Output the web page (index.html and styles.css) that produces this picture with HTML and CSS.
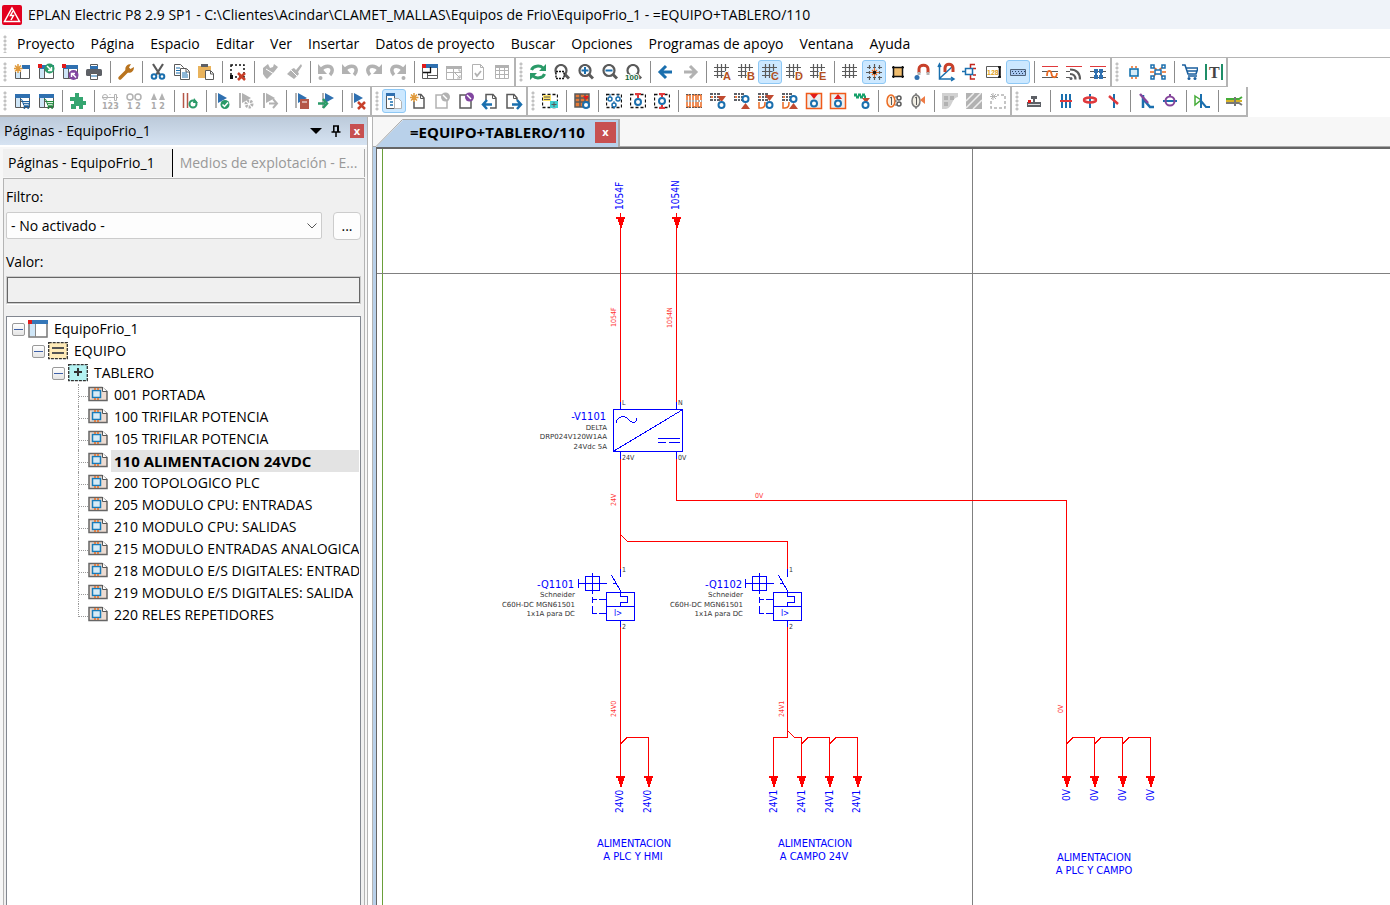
FILE: index.html
```html
<!DOCTYPE html>
<html lang="es">
<head>
<meta charset="utf-8">
<title>EPLAN Electric P8 2.9 SP1</title>
<link rel="stylesheet" href="styles.css">
</head>
<body>
<svg class="defs" aria-hidden="true">
  <symbol id="win" viewBox="0 0 16 16"><path class="fw k" d="M1.500 2.500h14v12h-14z"/><path class="fb" d="M1 1h15v4H1z"/><path class="fl" d="M2 5h4v9H2z"/><path class="k" d="M6.500 5v9"/></symbol>
  <symbol id="star" viewBox="0 0 16 16"><path class="o2" stroke-width="1.500" d="M4 0v9M-.5 4.500h9M1 1.500l6 6M7 1.500l-6 6"/></symbol>
  <symbol id="page" viewBox="0 0 16 16"><path class="fw k" stroke-width="1.500" d="M4 1.500h7l3 3.500v10H4z"/><path class="k" d="M10.500 1.500V5.500H14"/></symbol>
  <symbol id="flag" viewBox="0 0 16 16"><path class="g" stroke-width="2" d="M2 0v15"/><path class="fb" d="M4 0l9 5-9 5z"/></symbol>
  <symbol id="gflag" viewBox="0 0 16 16"><path class="g" stroke-width="2" d="M2 0v15"/><path class="fg" d="M4 0l9 5-9 5z"/></symbol>
  <symbol id="grid" viewBox="0 0 16 16"><path class="k" stroke-width="1.300" d="M4.500 1v14M8.500 1v14M12.500 1v14M1 4.500h15M1 8.500h15M1 12.500h15"/></symbol>
  <symbol id="lgrid" viewBox="0 0 16 16"><path class="k" stroke-width="1.200" d="M3.500 0v14M7.500 0v14M11.500 0v14M0 3.500h15M0 7.500h15M0 11.500h15"/></symbol>
  <symbol id="dash" viewBox="0 0 16 16"><path class="kk" stroke-dasharray="3 2" stroke-width="1.300" d="M.5 1.500h15v13H.5z"/></symbol>
  <symbol id="lens" viewBox="0 0 16 16"><circle class="k" stroke-width="2.200" cx="7" cy="6.500" r="5.500"/><path class="k" stroke-width="3" d="M11 10.500l4 4"/></symbol>
  <symbol id="undo" viewBox="0 0 16 16"><path class="g" stroke-width="3.500" d="M3 5.500C7 1 13 1.500 14 5c.5 2 0 4-2 6"/><path class="fg" d="M0 0v10h9z"/></symbol>
  <symbol id="cart" viewBox="0 0 16 16"><path stroke="currentColor" stroke-width="1.600" d="M0 1h3l3 9h8l2-6H4M5 7h10M6 12h9"/><circle fill="currentColor" cx="7" cy="14.500" r="1.500"/><circle fill="currentColor" cx="13" cy="14.500" r="1.500"/></symbol>
  <symbol id="tgrid" viewBox="0 0 16 16"><path class="fk" d="M0 0h10v8H0z"/><path stroke="#fff" d="M0 2.500h10M0 5.500h10M3.500 0v8M6.500 0v8"/><path class="fo" d="M1 3h2v2H1z"/></symbol>
  <symbol id="pin" viewBox="0 0 16 16"><circle class="fw b" stroke-width="2" cx="11.500" cy="12" r="3"/></symbol>
  <symbol id="leaf" viewBox="0 0 20 16"><path fill="#eddcd2" stroke="#666" stroke-width="1.500" d="M1 1.500h13l5 4V14.500H1z"/><path fill="#fff" stroke="#555" d="M14.500 1v4.500H19"/><path fill="#d5ebf7" stroke="#187cba" stroke-width="1.500" d="M4.500 4.500h8v7h-8z"/><path stroke="#e66b20" stroke-width="1.500" d="M7 2v2M10 2v2M7 12v2M10 12v2"/></symbol>
</svg>

<header class="titlebar">
  <svg class="logo" viewBox="0 0 20 20" aria-hidden="true"><rect width="20" height="20" rx="2" fill="#e2001f"/><path d="M10 3l7.500 13.500h-15z" fill="none" stroke="#fff" stroke-width="1.500"/><path d="M11 6l-2.500 4.500h3L9 15" fill="none" stroke="#fff" stroke-width="1.500"/></svg>
  <h1>EPLAN Electric P8 2.9 SP1 - C:\Clientes\Acindar\CLAMET_MALLAS\Equipos de Frio\EquipoFrio_1 - =EQUIPO+TABLERO/110</h1>
</header>

<nav class="menubar" aria-label="Menú">
  <i class="grip"></i>
  <button>Proyecto</button><button>Página</button><button>Espacio</button><button>Editar</button><button>Ver</button><button>Insertar</button><button>Datos de proyecto</button><button>Buscar</button><button>Opciones</button><button>Programas de apoyo</button><button>Ventana</button><button>Ayuda</button>
</nav>

<div class="toolrow">
  <div class="group" role="toolbar" aria-label="Estándar">
    <i class="grip"></i>
    <button aria-label="Nuevo proyecto"><svg viewBox="0 0 16 16"><use href="#win"/><path class="fw" d="M0 0h8v8H0z"/><use href="#star"/></svg></button>
    <button aria-label="Abrir proyecto"><svg viewBox="0 0 16 16"><use href="#win"/><path class="fr" d="M0 0h4v4H0z"/><circle class="fn" cx="11.500" cy="4.500" r="5"/><path stroke="#fff" stroke-width="1.500" d="M9 2l4 4M13.500 3v3.500H10"/></svg></button>
    <button aria-label="Cerrar proyecto"><svg viewBox="0 0 16 16"><use href="#win"/><path class="fr" d="M0 0h4v4H0z"/><circle class="fv" cx="11.500" cy="11" r="5"/><path stroke="#fff" stroke-width="1.500" d="M14 13.500l-4-4M9.500 13V9.500H13"/></svg></button>
    <button aria-label="Imprimir"><svg viewBox="0 0 16 16"><path class="fw k" d="M4.500.5h7v5h-7z"/><path class="fb" d="M4 2h8v3H4z"/><rect class="fk" x="0" y="5" width="16" height="7" rx="1.500"/><path class="fw k" d="M4.500 9.500h7v6h-7z"/><path class="b" d="M5 12h6"/></svg></button>
    <i class="sep"></i>
    <button aria-label="Ajustes"><svg viewBox="0 0 16 16"><path stroke="#b9741f" stroke-width="3.500" stroke-linecap="round" d="M2 14l8-8"/><path fill="#b9741f" d="M8 8C6 3 9 0 13 0l-2 3.500 1.500 1.500L16 3c0 5-4 7-8 5z"/></svg></button>
    <i class="sep"></i>
    <button aria-label="Cortar"><svg viewBox="0 0 16 16"><path class="k" stroke-width="2.200" d="M3 0l7 11M13 0L6 11"/><circle class="b" stroke-width="2" cx="4" cy="12.500" r="2.300"/><circle class="b" stroke-width="2" cx="12" cy="12.500" r="2.300"/></svg></button>
    <button aria-label="Copiar"><svg viewBox="0 0 16 16"><path class="fw k" d="M.5.500h6l3 3v8h-9z"/><path class="b" d="M2 4h4M2 6.500h4M2 9h4"/><path class="fw k" d="M6.500 4.500h6l3 3v8h-9z"/><path class="k" d="M12 5v3h3"/><path class="b" d="M8 9h5M8 11h6M8 13h6"/></svg></button>
    <button aria-label="Pegar"><svg viewBox="0 0 16 16"><path fill="#e9b35c" d="M0 2h13v12H0z"/><path class="fk" d="M3 0h7v3H3z"/><path class="fw k" d="M7.500 6.500h5l3 3v6h-8z"/><path class="k" d="M12.500 7v3h3"/></svg></button>
    <i class="sep"></i>
    <button aria-label="Borrar selección"><svg viewBox="0 0 16 16"><path class="kk" stroke-dasharray="2 2" stroke-width="1.500" d="M1 1h13v12H1z"/><path class="kf" d="M0 11h3v4H0z"/><path class="r2" stroke-width="2.500" d="M8 9l7 7M15 9l-7 7"/></svg></button>
    <i class="sep"></i>
    <button aria-label="Copiar formato" disabled><svg viewBox="0 0 16 16"><path class="fg" d="M1 4l5-4 2 4 3-1 1-3 4 3-4 5-7 7-2-2-2-3z"/><path stroke="#fff" d="M4 5l8 5"/></svg></button>
    <button aria-label="Asignar formato" disabled><svg viewBox="0 0 16 16"><path class="fg" d="M1 10l5-5 2-1 2 2 5-6 1 2-4 6 1 2-5 5z"/><path stroke="#fff" d="M5 6l6 6"/></svg></button>
    <i class="sep"></i>
    <button aria-label="Deshacer lista" disabled><svg viewBox="0 0 16 16"><use href="#undo"/><circle class="fg" cx="2.500" cy="14" r="2"/></svg></button>
    <button aria-label="Deshacer" disabled><svg viewBox="0 0 16 16"><use href="#undo"/></svg></button>
    <button aria-label="Restablecer" disabled><svg viewBox="0 0 16 16"><g transform="matrix(-1 0 0 1 16 0)"><use href="#undo"/></g></svg></button>
    <button aria-label="Restablecer lista" disabled><svg viewBox="0 0 16 16"><g transform="matrix(-1 0 0 1 16 0)"><use href="#undo"/><circle class="fg" cx="2.500" cy="14" r="2"/></g></svg></button>
    <i class="sep"></i>
    <button aria-label="Navegador"><svg viewBox="0 0 16 16"><path class="fw k" d="M.5 2.500h15v12H.5zM5.500 8v6M5.500 11.500h10"/><path class="fb" d="M4 0h12v4H4z"/><path class="fr" d="M0 0h4v4H0z"/><path class="kk" stroke-width="1.300" d="M8.500 3v5.500H1"/></svg></button>
    <button aria-label="Ajustar" disabled><svg viewBox="0 0 16 16"><path class="g" d="M.5 3.500h15v12H.5zM1 8.500h15M7.500 4v11M9 9l5 5M11 14h3v-3M12 6h2v2"/><path class="fg" d="M0 2h16v3H0z"/></svg></button>
    <button aria-label="Comprobar página" disabled><svg viewBox="0 0 16 16"><path class="g" d="M2.500.5h8l3 3v12h-11zM10.500.5v3h3"/><path class="g" stroke-width="1.800" d="M5 9l2 3 4-5"/></svg></button>
    <button aria-label="Tabla" disabled><svg viewBox="0 0 16 16"><path class="g" d="M1.500 1.500h13v13h-13zM2 6.500h12M2 10.500h12M5.500 4v10M10.500 4v10"/><path class="fg" d="M1 1h14v3H1z"/></svg></button>
  </div>
  <div class="group" role="toolbar" aria-label="Vista">
    <i class="grip"></i>
    <button aria-label="Actualizar"><svg viewBox="0 0 16 16"><path class="n" stroke-width="3" d="M1.500 6C3 1.500 10 1 13 4M14.500 10C13 14.500 6 15 3 12"/><path class="fn" d="M16 0v7H9zM0 16V9h7z"/></svg></button>
    <button aria-label="Zoom ventana"><svg viewBox="0 0 16 16"><use href="#lens"/><path class="fw kk" stroke-dasharray="2 1" stroke-width="1.400" d="M2 7.500h8v7H2z"/></svg></button>
    <button aria-label="Acercar"><svg viewBox="0 0 16 16"><use href="#lens"/><path class="b" stroke-width="2" d="M3.500 6.500h7M7 3v7"/></svg></button>
    <button aria-label="Alejar"><svg viewBox="0 0 16 16"><use href="#lens"/><path class="b" stroke-width="2" d="M3.500 6.500h7"/></svg></button>
    <button aria-label="Zoom 100"><svg viewBox="0 0 16 16"><use href="#lens"/><text x="-1" y="16" class="zt">100</text></svg></button>
    <i class="sep"></i>
    <button aria-label="Atrás"><svg viewBox="0 0 16 16"><path class="b" stroke-width="3" d="M2 8h12M8 2L2 8l6 6"/></svg></button>
    <button aria-label="Adelante"><svg viewBox="0 0 16 16"><path class="g" stroke-width="3" d="M14 8H2M8 2l6 6-6 6"/></svg></button>
    <i class="sep"></i>
    <button aria-label="Cuadrícula A"><svg viewBox="0 0 16 16"><use href="#lgrid"/><text class="gt" x="9" y="16">A</text></svg></button>
    <button aria-label="Cuadrícula B"><svg viewBox="0 0 16 16"><use href="#lgrid"/><text class="gt" x="9" y="16">B</text></svg></button>
    <button class="on" aria-label="Cuadrícula C"><svg viewBox="0 0 16 16"><use href="#lgrid"/><text class="gt" x="9" y="16">C</text></svg></button>
    <button aria-label="Cuadrícula D"><svg viewBox="0 0 16 16"><use href="#lgrid"/><text class="gt" x="9" y="16">D</text></svg></button>
    <button aria-label="Cuadrícula E"><svg viewBox="0 0 16 16"><use href="#lgrid"/><text class="gt" x="9" y="16">E</text></svg></button>
    <i class="sep"></i>
    <button aria-label="Cuadrícula"><svg viewBox="0 0 16 16"><use href="#lgrid"/></svg></button>
    <button class="on" aria-label="Ajustar a cuadrícula"><svg viewBox="0 0 16 16"><path class="k" stroke-width="1.200" d="M3.500 1v4M3.500 12v4M13.500 1v4M13.500 12v4M1 3.500h4M1 13.500h4M12 3.500h4M12 13.500h4M8.500 0v4M8.500 13v3M0 8.500h4M13 8.500h3M3.500 7v3M13.500 7v3M7 3.500h3M7 13.500h3"/><path class="o" stroke-width="1.200" d="M8.500 4v9M4 8.500h9M6 6l5 5M11 6l-5 5"/><circle class="kf" cx="8.500" cy="8.500" r="1.800"/></svg></button>
    <button aria-label="Alinear a cuadrícula"><svg viewBox="0 0 16 16"><path fill="#f0bd6d" d="M4 4h8v8H4z"/><path class="kk" stroke-width="1.500" d="M2 3.500h12M2 12.500h12M3.500 2v12M12.500 2v12"/></svg></button>
    <button aria-label="Ajuste a objeto"><svg viewBox="0 0 16 16"><path class="r2" stroke-width="3" d="M5 9V5c0-5 9-5 9 0v4"/><path class="g" stroke-width="3" d="M5 8v3M14 8v3"/><circle class="fb" cx="3" cy="13.500" r="2.500"/></svg></button>
    <button aria-label="Lógica de diseño"><svg viewBox="0 0 16 16"><path class="b" stroke-width="1.500" d="M1.500 1v14h14M2 14L14 3M0 3l1.500-3L3 3M13 13l3 2-3 2"/><path class="r2" stroke-width="3" d="M7 8V4c0-5 8-5 8 0v4"/></svg></button>
    <button aria-label="Conectar automáticamente"><svg viewBox="0 0 16 16"><path stroke="#c4261d" stroke-width="1.500" d="M13 .5H8.500V5M8.500 10v5H13M14 4.500h-3M14 11h-3"/><path class="b fw" stroke-width="1.500" d="M3.500 4.500h7v6h-7zM0 7.500h3"/></svg></button>
    <button aria-label="Entrada de coordenadas"><svg viewBox="0 0 16 16"><path class="k fw" d="M.5 2.500h14v11H.5z"/><text class="ct" x="1" y="11">128</text><path class="kk" stroke-width="1.500" d="M12 3h3M13.500 3v10M12 13h3"/></svg></button>
    <button class="on" aria-label="Regla"><svg viewBox="0 0 16 16"><path fill="#a9c9f0" stroke="#506176" d="M.5 5.500h15v6H.5z"/><path stroke="#263f60" stroke-dasharray="1 2" d="M2 7.500h13M3 9.500h10"/></svg></button>
    <i class="sep"></i>
    <button aria-label="Conexiones"><svg viewBox="0 0 16 16"><path class="r" d="M0 2.500h16"/><path class="k" d="M0 7.500h16M0 13.500h16"/><path class="o" stroke-width="1.800" d="M5 12c0-7 4-6 4.500-2s5 5 5.500-1"/></svg></button>
    <button aria-label="Señales"><svg viewBox="0 0 16 16"><path class="r" d="M0 2.500h16"/><path class="k" d="M0 7.500h4M0 13.500h4"/><path class="k" stroke-width="2.200" d="M4 5.500c7 0 10 4 10 10M4 10c4 0 5.500 2 5.500 5.500"/><circle class="fk" cx="5" cy="14.500" r="1.500"/></svg></button>
    <button aria-label="Potenciales"><svg viewBox="0 0 16 16"><path class="r" d="M0 2.500h16"/><path class="k" d="M0 7.500h16M0 13.500h16"/><path class="fb" d="M4 5h4v4H4zM9 5h4v4H9zM4 11h4v4H4zM9 11h4v4H9zM5 8h2v4H5zM10 8h2v4h-2z"/></svg></button>
  </div>
  <div class="group" role="toolbar" aria-label="Insertar">
    <i class="grip"></i>
    <button aria-label="Símbolo"><svg viewBox="0 0 16 16"><path fill="#d5ebf7" stroke="#0a6cab" stroke-width="1.500" d="M4 5h8v7H4z"/><path class="o" stroke-width="1.500" d="M6 2v2M10 2v2M6 13v2M10 13v2"/></svg></button>
    <button aria-label="Macro"><svg viewBox="0 0 16 16"><path class="o" stroke-width="1.500" d="M3 3l3 2v4l-3 5M13 3l-3 2v4l3 5M0 8h4M12 8h4"/><path class="b fw" stroke-width="1.500" d="M5 6h6v4H5zM1 1h3v3H1zM12 1h3v3h-3zM1 12h3v3H1zM12 12h3v3h-3z"/></svg></button>
    <i class="sep"></i>
    <button aria-label="Artículos"><svg class="blue" viewBox="0 0 16 16"><use href="#cart"/></svg></button>
    <button aria-label="Texto"><svg viewBox="0 0 16 16"><path stroke="#078258" stroke-width="1.800" d="M0 0v16M16 0v16"/><text class="tt" x="3" y="14">T</text></svg></button>
  </div>
</div>

<div class="toolrow second">
  <div class="group" role="toolbar" aria-label="Proyecto">
    <i class="grip"></i>
    <button aria-label="Lista de piezas"><svg class="blue" viewBox="0 0 16 16"><use href="#win"/><path class="k" d="M7 8.500h8"/><use href="#cart" x="6" y="6" width="10" height="10"/></svg></button>
    <button aria-label="Pedido"><svg class="green" viewBox="0 0 16 16"><use href="#win"/><path class="k" d="M7 8.500h8"/><use href="#cart" x="6" y="6" width="10" height="10"/></svg></button>
    <i class="sep"></i>
    <button aria-label="Complementos"><svg viewBox="0 0 16 16"><path fill="#35a570" d="M0 4h5V0h4v4h4v4h3v4h-3v4H9v-3H6v3H1v-5h3V8H0z"/></svg></button>
    <i class="sep"></i>
    <button aria-label="Numerar dispositivos"><svg viewBox="0 0 16 16"><path class="g" d="M0 4.500h16M8 1v1M8 7v1"/><circle class="g" cx="3" cy="4" r="2.500"/><path class="g fw" d="M12.500 1.500h2v6h-2z"/><text class="nt" x="0" y="16">123</text></svg></button>
    <button aria-label="Numerar bornas"><svg viewBox="0 0 16 16"><circle class="g" stroke-width="1.500" cx="4" cy="4" r="3"/><circle class="g" stroke-width="1.500" cx="12" cy="4" r="3"/><text class="nt" x="1" y="16">1 2</text></svg></button>
    <button aria-label="Numerar conectores"><svg viewBox="0 0 16 16"><path class="fg" d="M4 0l3 7H1zM12 0l3 7H9z"/><text class="nt" x="1" y="16">1 2</text></svg></button>
    <i class="sep"></i>
    <button aria-label="Actualizar conexiones"><svg viewBox="0 0 16 16"><path stroke="#b55748" stroke-width="1.500" d="M1.500 0v15M5.500 0v15"/><circle class="n" stroke-width="2" cx="11" cy="11" r="3.500"/><path class="fn" d="M12 5l4 5h-5z"/></svg></button>
    <i class="sep"></i>
    <button aria-label="Revisar"><svg viewBox="0 0 16 16"><use href="#flag"/><circle class="fn" cx="11" cy="11.500" r="4.500"/><path stroke="#fff" stroke-width="1.500" d="M8.500 11.500l2 2 3.500-4"/></svg></button>
    <button aria-label="Ajustes de revisión" disabled><svg viewBox="0 0 16 16"><use href="#gflag"/><circle class="fw g" stroke-dasharray="2 1" stroke-width="3" cx="11" cy="11" r="3"/></svg></button>
    <button aria-label="Siguiente mensaje" disabled><svg viewBox="0 0 16 16"><use href="#gflag"/><path class="g" stroke-width="2" d="M7 10.500h7M11 6l4 4.500-4 4.500"/></svg></button>
    <i class="sep"></i>
    <button aria-label="Registro"><svg viewBox="0 0 16 16"><use href="#flag"/><path fill="#b55748" d="M6 6h9v10H6z"/><path stroke="#fff" d="M8 9h5"/></svg></button>
    <button aria-label="Ir a mensaje"><svg viewBox="0 0 16 16"><use href="#flag" x="3"/><path class="n" stroke-width="2.500" d="M0 10.500h7M5 6l4 4.500L5 15"/></svg></button>
    <i class="sep"></i>
    <button aria-label="Borrar mensajes"><svg viewBox="0 0 16 16"><use href="#flag"/><path class="r2" stroke-width="2.500" d="M8 9l7 7M15 9l-7 7"/></svg></button>
  </div>
  <div class="group" role="toolbar" aria-label="Páginas">
    <i class="grip"></i>
    <button class="on" aria-label="Navegador de páginas"><svg viewBox="0 0 16 16"><path class="fw k" d="M.5.500h8v15h-8z"/><path class="fb" d="M0 0h9v3H0z"/><path class="b" stroke-width="1.500" d="M2 6h4M4 9h3M4 12h3"/><path class="fw g" d="M8.500 5.500h4l3 3v7h-7z"/></svg></button>
    <button aria-label="Nueva página"><svg viewBox="0 0 16 16"><use href="#page"/><path class="fw" d="M0 0h8v8H0z"/><use href="#star"/></svg></button>
    <button aria-label="Abrir página" disabled><svg viewBox="0 0 16 16"><path class="g" stroke-width="1.500" d="M2 2h8l3 3v10H2z"/><circle class="fg" cx="11.500" cy="4" r="4.500"/><path stroke="#fff" stroke-width="1.500" d="M9 2l4 4"/></svg></button>
    <button aria-label="Cerrar página"><svg viewBox="0 0 16 16"><path class="k" stroke-width="1.500" d="M2 2h8l3 3v10H2z"/><circle class="fv" cx="11.500" cy="4" r="4.500"/><path stroke="#fff" stroke-width="1.500" d="M9 2l4 4"/></svg></button>
    <button aria-label="Página anterior"><svg viewBox="0 0 16 16"><use href="#page"/><path class="fw" d="M0 7h8v9H0z"/><path class="b" stroke-width="2.500" d="M1 11.500h9M5 7l-4 4.500L5 16"/></svg></button>
    <button aria-label="Página siguiente"><svg viewBox="0 0 16 16"><use href="#page" x="-3"/><path class="fw" d="M8 7h8v9H8z"/><path class="b" stroke-width="2.500" d="M6 11.500h9M11 7l4 4.500-4 4.500"/></svg></button>
  </div>
  <div class="group" role="toolbar" aria-label="Dispositivos">
    <i class="grip"></i>
    <button aria-label="Estructura"><svg viewBox="0 0 16 16"><use href="#dash"/><path fill="#ffe36b" d="M1 2h8v6H1z"/><path fill="#40cfcf" d="M8 8h8v7H8z"/><path class="k" d="M2 4h6M2 6.500h6M12 9v5M9.500 11.500h5"/></svg></button>
    <i class="sep"></i>
    <button aria-label="Regletero"><svg viewBox="0 0 16 16"><path fill="#e57a37" class="k" stroke-width="1.500" d="M1 1h14v13H1zM1 5h14M1 9h14M6 1v13M11 1v13"/><circle class="fw b" stroke-width="2" cx="12" cy="12" r="3"/><path class="fr" d="M9 3h6l-3 4z"/></svg></button>
    <i class="sep"></i>
    <button aria-label="Bornas"><svg viewBox="0 0 16 16"><use href="#dash"/><circle class="fw b" stroke-width="1.500" cx="4" cy="6" r="2"/><circle class="fw b" stroke-width="1.500" cx="12" cy="6" r="2"/><circle class="fw b" stroke-width="1.500" cx="8" cy="12" r="2"/><path class="b" d="M4 1v3M12 1v3M8 8v2M8 14v2"/></svg></button>
    <button aria-label="Borna arriba"><svg viewBox="0 0 16 16"><use href="#dash"/><circle class="fw b" stroke-width="2" cx="8" cy="9" r="3"/><path class="r" stroke-width="2" d="M5 1h6M8 1v4"/></svg></button>
    <button aria-label="Borna doble"><svg viewBox="0 0 16 16"><use href="#dash"/><circle class="fw b" stroke-width="2" cx="8" cy="8" r="3"/><path class="r" stroke-width="2" d="M5 1h6M8 1v3M5 15h6M8 12v3"/></svg></button>
    <i class="sep"></i>
    <button aria-label="Puentes"><svg viewBox="0 0 16 16"><path class="o" stroke-width="1.500" d="M1 7V2h3v5M7 7V2h3v5M12 7V2h3v5M1 9v5h3V9M7 9v5h3V9M12 9v5h3V9"/><path class="k" stroke-dasharray="2 1" d="M0 1.500h16M0 8h16M0 14.500h16"/></svg></button>
    <button aria-label="Destino inferior"><svg viewBox="0 0 16 16"><use href="#tgrid"/><path class="fd" d="M7 3h9l-4.500 6z"/><use href="#pin"/></svg></button>
    <button aria-label="Destino superior"><svg viewBox="0 0 16 16"><use href="#tgrid"/><circle class="fw b" stroke-width="2" cx="11.500" cy="6" r="3"/><path class="fd" d="M7 16h9l-4.500-6z"/></svg></button>
    <button aria-label="Puente inferior"><svg viewBox="0 0 16 16"><use href="#tgrid"/><path class="fd" d="M7 2h9l-4.500 6z"/><use href="#pin"/><path class="o" stroke-width="1.500" d="M1 9v6h2c4 0 4-3 4-6"/></svg></button>
    <button aria-label="Puente superior"><svg viewBox="0 0 16 16"><use href="#tgrid"/><circle class="fw b" stroke-width="2" cx="11.500" cy="6" r="3"/><path class="fd" d="M7 16h9l-4.500-6z"/><path class="o" stroke-width="1.500" d="M1 9v6h2c4 0 4-3 4-6"/></svg></button>
    <button aria-label="Entrada"><svg viewBox="0 0 16 16"><path fill="#eee" stroke="#f05a1a" stroke-width="1.500" d="M.5.500h15v15H.5z"/><path class="fr" d="M4 1h8L8 6z"/><circle class="fw b" stroke-width="2" cx="8" cy="10.500" r="3"/></svg></button>
    <button aria-label="Salida"><svg viewBox="0 0 16 16"><path fill="#eee" stroke="#f05a1a" stroke-width="1.500" d="M.5.500h15v15H.5z"/><path class="fr" d="M4 6h8L8 1z"/><circle class="fw b" stroke-width="2" cx="8" cy="10.500" r="3"/></svg></button>
    <button aria-label="Distribuir"><svg viewBox="0 0 16 16"><path stroke="#16a06a" stroke-width="3" stroke-dasharray="3 1" d="M0 2h11M2 4h10"/><path class="fd" d="M8 5h8l-4 5z"/><use href="#pin"/></svg></button>
    <i class="sep"></i>
    <button aria-label="Cable"><svg viewBox="0 0 16 16"><ellipse fill="#fff0dd" class="o" stroke-width="1.500" cx="5" cy="8" rx="4" ry="6"/><path class="k" d="M4 5l1.500-1v8M9 4h2M9 12h2M9 8h2"/><circle class="k" stroke-width="1.500" cx="13" cy="5" r="2"/><circle class="k" stroke-width="1.500" cx="13" cy="11" r="2"/></svg></button>
    <button aria-label="Editar cable"><svg viewBox="0 0 16 16"><ellipse fill="#f2efe4" stroke="#777" stroke-width="1.500" cx="6" cy="8" rx="4" ry="6"/><path class="k" d="M5 5l1.500-1v8M6 0v2M6 14v2"/><path class="fo" d="M10 7l5-4v8z"/></svg></button>
    <i class="sep"></i>
    <button aria-label="Montaje" disabled><svg viewBox="0 0 16 16"><path fill="#d1d1d1" d="M0 0h16v4c-7 1-5 11-12 12H0z"/><path class="fg" d="M2 3h4v4H2zM8 3h4v4H8zM2 9h4v4H2z"/></svg></button>
    <button aria-label="Área" disabled><svg viewBox="0 0 16 16"><path class="fg" d="M0 0h16v16H0z"/><path stroke="#eee" stroke-width="1.500" d="M0 8l8-8M0 15L15 0M7 16l9-9"/></svg></button>
    <button aria-label="Nueva área" disabled><svg viewBox="0 0 16 16"><path class="g" stroke-dasharray="3 2" stroke-width="1.500" d="M1 2h14v13H1z"/><path class="fw" d="M0 0h7v7H0z"/><path class="g" d="M3 0v7M0 3.500h7M1 1l5 5M6 1L1 6"/></svg></button>
  </div>
  <div class="group" role="toolbar" aria-label="Conexiones">
    <i class="grip"></i>
    <button aria-label="Perfil"><svg viewBox="0 0 16 16"><path class="fk" d="M1 9h14v5H1zM5 3h6v3H9v3H7V6H5z"/><path stroke="#ddd" d="M2 11.500h12"/><path class="fr" d="M2 7h3v3H2z"/></svg></button>
    <i class="sep"></i>
    <button aria-label="Conexión múltiple"><svg viewBox="0 0 16 16"><path class="b" stroke-width="2" d="M4 1v14M8 1v14M12 1v14"/><path class="r" stroke-width="2" d="M2 8h12"/></svg></button>
    <button aria-label="Definición de cable"><svg viewBox="0 0 16 16"><path class="b" stroke-width="2" d="M8 1v14"/><ellipse class="r" stroke-width="2.500" cx="8" cy="7" rx="6" ry="2.500"/></svg></button>
    <button aria-label="Interrupción"><svg viewBox="0 0 16 16"><path class="b" stroke-width="2" d="M8 1v14"/><path class="r" stroke-width="2.500" d="M3 3l9 8"/></svg></button>
    <i class="sep"></i>
    <button aria-label="Derivación"><svg viewBox="0 0 16 16"><path class="b" stroke-width="2.500" d="M5 2v13M6 7l6 7h4"/><path stroke="#85459b" stroke-width="2.500" d="M2 1l8 9"/></svg></button>
    <button aria-label="Apantallamiento"><svg viewBox="0 0 16 16"><path class="b" stroke-width="2" d="M1 8h14"/><circle stroke="#85459b" stroke-width="2" cx="8" cy="8" r="4.500"/><path stroke="#85459b" stroke-width="2" d="M8 1v3"/></svg></button>
    <i class="sep"></i>
    <button aria-label="Potencial"><svg viewBox="0 0 16 16"><path stroke="#45ac38" stroke-width="1.500" d="M1 3l6 4-6 5z"/><path class="b" stroke-width="2" d="M7 1v14M7 8l5 6h4"/></svg></button>
    <i class="sep"></i>
    <button aria-label="Barra"><svg viewBox="0 0 16 16"><path stroke="#45ac38" stroke-width="2" d="M0 6h13l3-2"/><path stroke="#d6b326" stroke-width="2" d="M0 8h16"/><path stroke="#777" stroke-width="2" d="M0 10h13l3 2M9 4v9"/></svg></button>
  </div>
</div>

<div class="workspace">
  <aside class="side">
    <div class="dockhead">
      <h2>Páginas - EquipoFrio_1</h2>
      <button aria-label="Menú del panel"><svg viewBox="0 0 12 12"><path d="M0 3h12L6 9z"/></svg></button>
      <button aria-label="Fijar"><svg viewBox="0 0 12 12"><path fill="none" stroke="#000" stroke-width="1.500" d="M3 1h6M3.800 1v6M8 1v6M1.500 7h9M6 7v5"/><path d="M7 1h2v6H7z"/></svg></button>
      <button class="close" aria-label="Cerrar panel">x</button>
    </div>
    <div class="tabs" role="tablist">
      <button role="tab" aria-selected="true">Páginas - EquipoFrio_1</button>
      <button role="tab" aria-selected="false">Medios de explotación - E...</button>
    </div>
    <div class="panel">
      <label for="filtro">Filtro:</label>
      <div class="filter">
        <div class="combo"><select id="filtro"><option>- No activado -</option></select><svg viewBox="0 0 10 6" aria-hidden="true"><path d="M.5.500L5 5l4.500-4.500" fill="none" stroke="#555"/></svg></div>
        <button class="more" aria-label="Editar filtro">...</button>
      </div>
      <label for="valor">Valor:</label>
      <input id="valor" class="value" type="text" disabled>
      <ul class="tree" role="tree">
        <li><div class="row"><button class="toggle" aria-label="Contraer EquipoFrio_1"></button><svg viewBox="0 0 20 20"><path fill="#fff" stroke="#777" stroke-width="1.500" d="M1 2h18v16H1z"/><path fill="#cfe6f7" d="M2 5h5v12H2z"/><path stroke="#888" d="M7.500 5v13"/><path fill="#3577b8" d="M0 1h20v4H0z"/><path fill="#e21b1b" d="M0 1h4v4H0z"/></svg><span>EquipoFrio_1</span></div>
          <ul>
            <li><div class="row"><button class="toggle" aria-label="Contraer EQUIPO"></button><svg viewBox="0 0 20 20"><path fill="#ffebb8" stroke="#333" stroke-dasharray="3 1" stroke-width="1.300" d="M.7 1.700h18.600v16H.7z"/><path stroke="#555" stroke-width="2" d="M4 7h12M4 12h12"/></svg><span>EQUIPO</span></div>
              <ul>
                <li><div class="row"><button class="toggle" aria-label="Contraer TABLERO"></button><svg viewBox="0 0 20 20"><path fill="#b4f3f3" stroke="#333" stroke-dasharray="3 1" stroke-width="1.300" d="M.7 1.700h18.600v16H.7z"/><path stroke="#333" stroke-width="2" d="M6 9h8M10 5v8"/></svg><span>TABLERO</span></div>
                  <ul>
                    <li class="row"><i class="branch"></i><svg viewBox="0 0 20 20"><use href="#leaf" y="1" width="20" height="16"/></svg><span>001 PORTADA</span></li>
                    <li class="row"><i class="branch"></i><svg viewBox="0 0 20 20"><use href="#leaf" y="1" width="20" height="16"/></svg><span>100 TRIFILAR POTENCIA</span></li>
                    <li class="row"><i class="branch"></i><svg viewBox="0 0 20 20"><use href="#leaf" y="1" width="20" height="16"/></svg><span>105 TRIFILAR POTENCIA</span></li>
                    <li class="row current"><i class="branch"></i><svg viewBox="0 0 20 20"><use href="#leaf" y="1" width="20" height="16"/></svg><span>110 ALIMENTACION 24VDC</span></li>
                    <li class="row"><i class="branch"></i><svg viewBox="0 0 20 20"><use href="#leaf" y="1" width="20" height="16"/></svg><span>200 TOPOLOGICO PLC</span></li>
                    <li class="row"><i class="branch"></i><svg viewBox="0 0 20 20"><use href="#leaf" y="1" width="20" height="16"/></svg><span>205 MODULO CPU: ENTRADAS</span></li>
                    <li class="row"><i class="branch"></i><svg viewBox="0 0 20 20"><use href="#leaf" y="1" width="20" height="16"/></svg><span>210 MODULO CPU: SALIDAS</span></li>
                    <li class="row"><i class="branch"></i><svg viewBox="0 0 20 20"><use href="#leaf" y="1" width="20" height="16"/></svg><span>215 MODULO ENTRADAS ANALOGICA</span></li>
                    <li class="row"><i class="branch"></i><svg viewBox="0 0 20 20"><use href="#leaf" y="1" width="20" height="16"/></svg><span>218 MODULO E/S DIGITALES: ENTRAD</span></li>
                    <li class="row"><i class="branch"></i><svg viewBox="0 0 20 20"><use href="#leaf" y="1" width="20" height="16"/></svg><span>219 MODULO E/S DIGITALES: SALIDA</span></li>
                    <li class="row last"><i class="branch"></i><svg viewBox="0 0 20 20"><use href="#leaf" y="1" width="20" height="16"/></svg><span>220 RELES REPETIDORES</span></li>
                  </ul>
                </li>
              </ul>
            </li>
          </ul>
        </li>
      </ul>
    </div>
  </aside>

  <main class="editor">
    <div class="doctabs">
      <svg class="slope" viewBox="0 0 32 28" aria-hidden="true"><path fill="#b9d1ea" d="M3 28L30 1h2v27z"/><path fill="none" stroke="#aaa" d="M0 27.500h3L29.500.5H32"/></svg>
      <div class="doctab"><b>=EQUIPO+TABLERO/110</b><button class="close" aria-label="Cerrar documento">x</button></div>
      <i class="rest"></i>
    </div>
    <div class="canvas">
      <svg class="sheet" role="img" aria-label="Esquema 110 Alimentación 24VDC">
        <defs>
          <path id="arrow" class="tip" d="M-4 0h9v2h-1v3h-1v3h-1v3h-2v-3h-1v-3h-1v-3h-2z"/>
          <g id="breaker">
            <path class="dev" d="M620.500 569v8M611.500 575l9 16M613 583.500h3M620.500 590v6.500h7v6h-7v4M606.500 592.500h28v28h-28zM606.500 606.500h28M620.500 620v7M585.500 576.500h14v14h-14zM592.500 573v21M578.500 583.500h28M578.500 579v9M592.500 597v6M592.500 599.500h4M599 599.500h7M592.500 606v7.500h4M599 613.500h7"/>
            <text class="trip" x="614" y="616">I&gt;</text>
            <text class="pinno" x="622" y="572">1</text><text class="pinno" x="622" y="629">2</text>
          </g>
        </defs>
        <g transform="translate(-377 -149)">
          <path class="green" d="M382.500 0v5000"/>
          <path class="frame" d="M377 273.500h6000M972.500 0v5000"/>
          <path class="wire" d="M620.500 213v190M676.500 213v190M620.500 458v112M676.500 458v42.500h390V776M621 535l6.500 6.500h160V570M620.500 627v149M621 743.500l6-6h21.500V776M787.500 627v110.500h-14V776M788 731l6.500 6.500h7V776M802 743.500l6-6h21.500V776M830 743.500l6-6h21.500V776M1067 743.500l6-6h21.500V776M1095 743.500l6-6h21.500V776M1123 743.500l6-6h21.500V776"/>
          <use href="#arrow" x="620" y="217"/><use href="#arrow" x="676" y="217"/>
          <use href="#arrow" x="620" y="776"/><use href="#arrow" x="648" y="776"/>
          <use href="#arrow" x="773" y="776"/><use href="#arrow" x="801" y="776"/><use href="#arrow" x="829" y="776"/><use href="#arrow" x="857" y="776"/>
          <use href="#arrow" x="1066" y="776"/><use href="#arrow" x="1094" y="776"/><use href="#arrow" x="1122" y="776"/><use href="#arrow" x="1150" y="776"/>

          <path class="dev" d="M620.500 402v7M676.500 402v7M620.500 451v8M676.500 451v8M613.500 409.500h69v42h-69zM614 451l68-41M616.500 422.500v-2l3-3 3-1h2l3 2 3 3 3 1h1l2-2v-3M658 438.500h22M658 442.500h8M669 442.500h11"/>
          <g class="pinno"><text x="622" y="405">L</text><text x="678" y="405">N</text><text x="622" y="460">24V</text><text x="678" y="460">0V</text></g>
          <use href="#breaker"/><use href="#breaker" x="167"/>

          <g class="tag"><text x="606" y="420">-V1101</text><text x="574" y="588">-Q1101</text><text x="742" y="588">-Q1102</text></g>
          <g class="part">
            <text x="607" y="430">DELTA</text><text x="607" y="439">DRP024V120W1AA</text><text x="607" y="449">24Vdc 5A</text>
            <text x="575" y="597">Schneider</text><text x="575" y="607">C60H-DC MGN61501</text><text x="575" y="616">1x1A para DC</text>
            <text x="743" y="597">Schneider</text><text x="743" y="607">C60H-DC MGN61501</text><text x="743" y="616">1x1A para DC</text>
          </g>
          <g class="label">
            <text transform="translate(623 210) rotate(-90)">1054F</text><text transform="translate(679 210) rotate(-90)">1054N</text>
            <text transform="translate(623 813) rotate(-90)">24V0</text><text transform="translate(651 813) rotate(-90)">24V0</text>
            <text transform="translate(777 813) rotate(-90)">24V1</text><text transform="translate(805 813) rotate(-90)">24V1</text><text transform="translate(833 813) rotate(-90)">24V1</text><text transform="translate(860 813) rotate(-90)">24V1</text>
            <text transform="translate(1070 801) rotate(-90)">0V</text><text transform="translate(1098 801) rotate(-90)">0V</text><text transform="translate(1126 801) rotate(-90)">0V</text><text transform="translate(1154 801) rotate(-90)">0V</text>
          </g>
          <g class="net">
            <text transform="translate(616 327) rotate(-90)">1054F</text><text transform="translate(672 328) rotate(-90)">1054N</text>
            <text transform="translate(616 506) rotate(-90)">24V</text><text x="755" y="498">0V</text>
            <text transform="translate(616 717) rotate(-90)">24V0</text><text transform="translate(784 717) rotate(-90)">24V1</text><text transform="translate(1063 713) rotate(-90)">0V</text>
          </g>
          <g class="note">
            <text x="634" y="847">ALIMENTACION</text><text x="633" y="860">A PLC Y HMI</text>
            <text x="815" y="847">ALIMENTACION</text><text x="814" y="860">A CAMPO 24V</text>
            <text x="1094" y="861">ALIMENTACION</text><text x="1094" y="874">A PLC Y CAMPO</text>
          </g>
        </g>
      </svg>
    </div>
  </main>
</div>
</body>
</html>
```
FILE: styles.css
```css
* { box-sizing: border-box; }
body { margin: 0; height: 100vh; display: flex; flex-direction: column; overflow: hidden; background: #fff; color: #000; font: 14px/20px "Open Sans", "Noto Sans", sans-serif; }
button, select, input { font: inherit; color: inherit; border: 0; padding: 0; margin: 0; background: none; }
h1, h2, ul { margin: 0; padding: 0; font-size: inherit; font-weight: normal; list-style: none; }
svg { display: block; overflow: visible; flex: none; }
.defs { position: absolute; width: 0; height: 0; }

/* Icon palette */
.k { stroke: #5a5a5a; }
.kk { stroke: #111; }
.g { stroke: #b2b2b2; }
.b { stroke: #1a6fae; }
.r { stroke: #e0393c; }
.r2 { stroke: #c8402a; }
.o { stroke: #ea6a22; }
.o2 { stroke: #e09a3c; }
.n { stroke: #2a9a68; }
.fw { fill: #fff; }
.fb { fill: #2f70b0; }
.fl { fill: #cfe6f7; }
.fr { fill: #e21b1b; }
.fo { fill: #ee7b45; }
.fd { fill: #c04a30; }
.fn { fill: #2a9a68; }
.fv { fill: #8146a0; }
.fg { fill: #b2b2b2; }
.fk { fill: #5d6066; }
.kf { fill: #111; }
.blue { color: #1a5f9e; }
.green { color: #1f8a3c; }
.zt { font: bold 8px "Liberation Sans", sans-serif; fill: #14663a; stroke: #fff; stroke-width: 2px; paint-order: stroke; }
.gt { font: bold 11px "Liberation Sans", sans-serif; fill: #b4501e; stroke: #fff; stroke-width: 2px; paint-order: stroke; }
.on .gt { stroke: #cce8ff; }
.ct { font: bold 7px "Liberation Sans", sans-serif; fill: #e0a020; }
.nt { font: bold 8px "DejaVu Sans", sans-serif; fill: #aaa; }
.tt { font: bold 16px "Liberation Serif", serif; fill: #444; }

.titlebar { display: flex; align-items: center; gap: 6px; height: 29px; padding-left: 2px; background: #eff3f9; flex: none; white-space: nowrap; }
.logo { width: 20px; height: 20px; }
.menubar { display: flex; height: 29px; padding-top: 2px; border-bottom: 1px solid #b4b4b4; flex: none; white-space: nowrap; }
.menubar button { padding: 0 8px; }
.menubar button:first-of-type { padding-left: 7px; }
.grip { width: 10px; flex: none; margin: 4px 0; background: radial-gradient(circle, #c2c2c2 1px, transparent 2px) 3px 0 / 4px 4px repeat-y; }
.toolrow { display: flex; height: 29px; flex: none; }
.group { display: flex; align-items: center; border-right: 2px solid #b4b4b4; border-bottom: 1px solid #b4b4b4; }
.second .group { border-bottom-width: 2px; }
.second { height: 30px; }
.group .grip { align-self: stretch; }
.group button { width: 24px; height: 24px; display: grid; place-items: center; border-radius: 3px; }
.group svg { width: 16px; height: 16px; fill: none; }
.group button.on { background: #cce8ff; border: 1px solid #8ec8f5; }
.sep { width: 8px; height: 22px; background: linear-gradient(#8c8c8c, #8c8c8c) 4px 0 / 1px 100% no-repeat; }

.workspace { display: flex; flex: 1; min-height: 0; }
.side { width: 368px; flex: none; display: flex; flex-direction: column; background: #f7f7f7; border-right: 1px solid #b4b4b4; }
.dockhead { display: flex; align-items: center; gap: 8px; height: 28px; padding: 0 3px 0 4px; background: linear-gradient(#bccada, #d6e3f2); }
.dockhead h2 { flex: 1; }
.dockhead svg { width: 12px; height: 12px; }
.close { background: #c75050; color: #fff; font: bold 11px/14px "Open Sans", sans-serif; width: 14px; height: 14px; text-align: center; }
.tabs { display: flex; align-items: stretch; height: 33px; padding: 2px 2px 1px 3px; border-top: 2px solid #fff; white-space: nowrap; }
.tabs button { padding: 0 5px; }
.tabs [aria-selected="true"] { width: 170px; flex: none; background: #f0f0f0; border-right: 1px solid #000; text-align: left; }
.tabs [aria-selected="false"] { color: #999; border-right: 1px solid #aaa; flex: 1; min-width: 0; overflow: hidden; }
.panel { flex: 1; min-height: 0; margin: 0 2px 0 3px; padding: 8px 3px 0 2px; display: flex; flex-direction: column; background: #f0f0f0; border: solid #b4b4b4; border-width: 1px 1px 0; }
.filter { display: flex; gap: 11px; margin: 5px 0 12px; align-items: flex-start; }
.combo { flex: 1; display: grid; align-items: center; }
.combo > * { grid-area: 1 / 1; }
.combo select { appearance: none; width: 100%; height: 27px; padding: 0 4px; background: #fdfdfd; border: 1px solid #ccc; border-radius: 2px; }
.combo svg { width: 10px; height: 6px; justify-self: end; margin-right: 5px; pointer-events: none; }
.more { width: 28px; height: 28px; background: #fdfdfd; border: 1px solid #ccc; border-radius: 4px; }
.value { height: 26px; flex: none; margin: 5px 1px 0; border: 1px solid #666; box-shadow: 0 2px 0 #fff; outline: 1px solid #ccc; background: #f0f0f0; }
.tree { flex: 1; min-height: 0; margin-top: 13px; padding: 1px 1px 0 5px; background: #fff; border: 1px solid #828790; border-bottom: 0; overflow: hidden; }
.tree ul { padding-left: 20px; }
.row { display: flex; align-items: center; height: 22px; white-space: nowrap; }
.row svg { width: 20px; height: 20px; margin: 0 3px; }
.row svg + span { flex: 1; min-width: 0; overflow: hidden; padding-left: 3px; line-height: 22px; }
.row .toggle { width: 13px; height: 13px; border: 1px solid #999; border-radius: 2px; background: linear-gradient(#3c5fa8, #3c5fa8) center / 9px 1px no-repeat, linear-gradient(#fff, #e4e4e4); }
.branch { width: 10px; height: 22px; margin-left: 6px; border-left: 1px dotted #999; }
.branch::before { content: ""; display: block; height: 12px; border-bottom: 1px dotted #999; }
.last .branch { border-left: 0; }
.last .branch::before { border-left: 1px dotted #999; }
.branch + svg { margin-left: 0; }
.row.current span { background: #e3e3e3; font-weight: bold; font-size: 15px; }

.editor { flex: 1; min-width: 0; margin-left: 4px; display: flex; flex-direction: column; border-left: 1px solid #b4b4b4; background: #b9d1ea; }
.doctabs { display: flex; align-items: flex-end; height: 30px; background: #f7f7f7; }
.slope { width: 32px; height: 28px; }
.doctab { display: flex; align-items: center; gap: 10px; height: 28px; padding: 0 2px 3px 5px; background: #b9d1ea; border-top: 1px solid #aaa; border-right: 2px solid #aaa; font-size: 15px; }
.doctab .close { width: 21px; height: 21px; line-height: 20px; }
.rest { flex: 1; height: 28px; border-bottom: 1px solid #aaa; }
.canvas { flex: 1; min-height: 0; margin: 0 0 0 3px; border: solid #666; border-width: 2px 0 0 1px; background: #fff; overflow: hidden; }
.sheet { width: 100%; height: 100%; overflow: hidden; }

/* Schematic */
.sheet path { fill: none; shape-rendering: crispEdges; }
.sheet .green { stroke: #6a9f3a; }
.frame { stroke: #808080; }
.wire { stroke: #f00; }
.dev { stroke: #00f; }
.sheet .tip { fill: #f00; }
.sheet text { font-family: "DejaVu Sans Condensed", "DejaVu Sans", sans-serif; }
.label { fill: #00f; font-size: 10px; }
.note { fill: #00f; font-size: 11px; text-anchor: middle; }
.tag { fill: #00f; font-size: 11px; text-anchor: end; }
.trip { fill: #00f; font-size: 8px; }
.pinno { fill: #333; font-size: 7px; }
.net { fill: #f33; font-size: 7px; }
.sheet .part text { font-family: "DejaVu Sans", sans-serif; }
.part { fill: #333; font-size: 7px; text-anchor: end; }
```
